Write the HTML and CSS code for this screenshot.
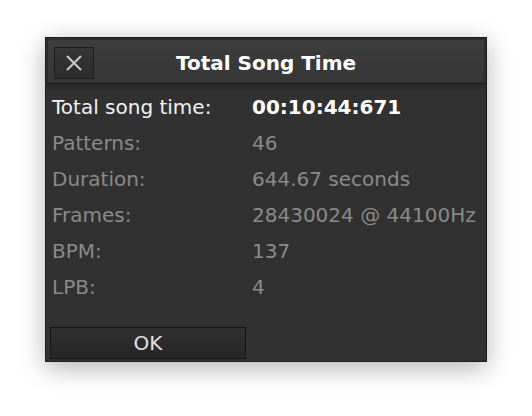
FILE: index.html
```html
<!DOCTYPE html>
<html>
<head>
<meta charset="utf-8">
<link rel="stylesheet" href="styles.css">
</head>
<body>
<div class="stage">
  <div class="window">
    <div class="titlebar">
      <div class="close">
        <svg width="16" height="16" viewBox="0 0 16 16"><path d="M1 1 L15 15 M15 1 L1 15" stroke="#c9c9c9" stroke-width="2" fill="none"/></svg>
      </div>
      <div class="title">Total Song Time</div>
      <div class="spacer"></div>
    </div>
    <div class="sep"></div>
    <div class="content">
      <div class="rows">
        <div class="label main">Total song time:</div><div class="value main">00:10:44:671</div>
        <div class="label">Patterns:</div><div class="value">46</div>
        <div class="label">Duration:</div><div class="value">644.67 seconds</div>
        <div class="label">Frames:</div><div class="value">28430024 @ 44100Hz</div>
        <div class="label">BPM:</div><div class="value">137</div>
        <div class="label">LPB:</div><div class="value">4</div>
      </div>
      <div class="ok">OK</div>
    </div>
  </div>
</div>
</body>
</html>
```
FILE: styles.css
```css
html, body {
  margin: 0;
  padding: 0;
  background: #ffffff;
  width: 532px;
  height: 416px;
  overflow: hidden;
  font-family: "DejaVu Sans", sans-serif;
}
.stage {
  padding: 37px 0 0 45px;
}
.window {
  box-sizing: border-box;
  width: 442px;
  height: 325px;
  background: #313131;
  border: 1px solid #1c1c1c;
  box-shadow: 0 6px 24px rgba(0,0,0,0.3);
  display: flex;
  flex-direction: column;
}
.titlebar {
  box-sizing: border-box;
  margin: 1px 1px 0 1px;
  height: 44px;
  background: linear-gradient(#3d3d3d, #363636);
  border: 1px solid #2a2a2a;
  display: flex;
  align-items: center;
  padding: 0 6px;
}
.close {
  box-sizing: border-box;
  width: 40px;
  height: 32px;
  margin-top: 4px;
  border: 1px solid #1e1e1e;
  background: linear-gradient(#363636, #2c2c2c);
  display: flex;
  align-items: center;
  justify-content: center;
}
.title {
  flex: 1;
  text-align: center;
  color: #ffffff;
  font-weight: bold;
  font-size: 20px;
  padding-top: 3px;
}
.spacer {
  width: 40px;
}
.sep {
  height: 5px;
  background: #2a2a2a;
  border-top: 1px solid #1f1f1f;
}
.content {
  padding: 0 0 0 4px;
  display: flex;
  flex-direction: column;
}
.rows {
  display: grid;
  grid-template-columns: 200px 1fr;
  padding-left: 2px;
  line-height: 36px;
  font-size: 20px;
  color: #8a8a8a;
}
.label.main {
  color: #f2f2f2;
}
.value.main {
  color: #ffffff;
  font-weight: bold;
}
.ok {
  box-sizing: border-box;
  margin-top: 22px;
  width: 196px;
  height: 32px;
  border: 1px solid #161616;
  background: linear-gradient(#303030, #262626);
  color: #e2e2e2;
  font-size: 20px;
  line-height: 30px;
  text-align: center;
}
```
